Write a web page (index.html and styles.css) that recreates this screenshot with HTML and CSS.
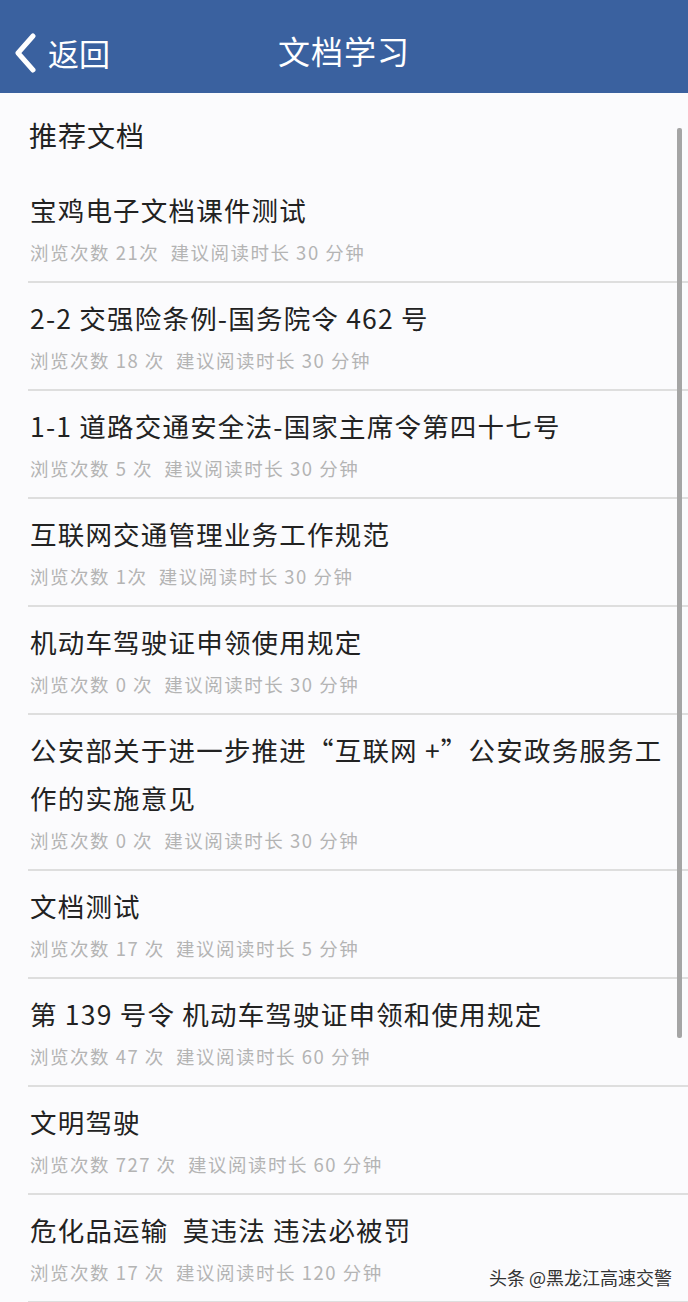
FILE: index.html
```html
<!DOCTYPE html>
<html lang="zh-CN">
<head>
    <meta charset="UTF-8">
    <meta name="viewport" content="width=device-width, initial-scale=1.0">
    <title>文档学习</title>
    <link rel="stylesheet" href="styles.css">
</head>
<body>
    <div class="navbar">
        <div class="back">
            <svg class="chevron" width="26" height="40" viewBox="0 0 26 40">
                <path d="M20 3 L5 20 L20 37" fill="none" stroke="#fff" stroke-width="5" stroke-linecap="round" stroke-linejoin="round"/>
            </svg>
            <span>返回</span>
        </div>
        <div class="nav-title">文档学习</div>
    </div>

    <div class="content">
        <div class="section-title">推荐文档</div>

        <ul class="doc-list">
            <li class="doc">
                <div class="doc-title">宝鸡电子文档课件测试</div>
                <div class="doc-meta">浏览次数 21次&nbsp;&nbsp;建议阅读时长 30 分钟</div>
            </li>
            <li class="doc">
                <div class="doc-title">2-2 交强险条例-国务院令 462 号</div>
                <div class="doc-meta">浏览次数 18 次&nbsp;&nbsp;建议阅读时长 30 分钟</div>
            </li>
            <li class="doc">
                <div class="doc-title">1-1 道路交通安全法-国家主席令第四十七号</div>
                <div class="doc-meta">浏览次数 5 次&nbsp;&nbsp;建议阅读时长 30 分钟</div>
            </li>
            <li class="doc">
                <div class="doc-title">互联网交通管理业务工作规范</div>
                <div class="doc-meta">浏览次数 1次&nbsp;&nbsp;建议阅读时长 30 分钟</div>
            </li>
            <li class="doc">
                <div class="doc-title">机动车驾驶证申领使用规定</div>
                <div class="doc-meta">浏览次数 0 次&nbsp;&nbsp;建议阅读时长 30 分钟</div>
            </li>
            <li class="doc">
                <div class="doc-title">公安部关于进一步推进“互联网 +”公安政务服务工作的实施意见</div>
                <div class="doc-meta">浏览次数 0 次&nbsp;&nbsp;建议阅读时长 30 分钟</div>
            </li>
            <li class="doc">
                <div class="doc-title">文档测试</div>
                <div class="doc-meta">浏览次数 17 次&nbsp;&nbsp;建议阅读时长 5 分钟</div>
            </li>
            <li class="doc">
                <div class="doc-title">第 139 号令 机动车驾驶证申领和使用规定</div>
                <div class="doc-meta">浏览次数 47 次&nbsp;&nbsp;建议阅读时长 60 分钟</div>
            </li>
            <li class="doc">
                <div class="doc-title">文明驾驶</div>
                <div class="doc-meta">浏览次数 727 次&nbsp;&nbsp;建议阅读时长 60 分钟</div>
            </li>
            <li class="doc">
                <div class="doc-title">危化品运输&nbsp;&nbsp;莫违法 违法必被罚</div>
                <div class="doc-meta">浏览次数 17 次&nbsp;&nbsp;建议阅读时长 120 分钟</div>
            </li>
        </ul>

        <div class="scrollbar"></div>
    </div>

    <div class="watermark">头条 @黑龙江高速交警</div>
</body>
</html>
```

FILE: styles.css
```css
html, body {
    margin: 0;
    padding: 0;
    height: 1302px;
    overflow: hidden;
}
body {
    font-family: "Noto Sans CJK SC", "Noto Sans", sans-serif;
    background: #fbfbfd;
    color: #222;
    position: relative;
}
.navbar {
    height: 93px;
    background: #3a619f;
    color: #fff;
    display: flex;
    align-items: center;
    justify-content: center;
    position: relative;
}
.back {
    position: absolute;
    left: 13px;
    top: 33px;
    display: flex;
    align-items: center;
    gap: 9px;
    font-size: 31px;
    line-height: 40px;
}
.chevron {
    display: block;
}
.nav-title {
    font-size: 32px;
    letter-spacing: 1px;
    line-height: 40px;
    margin-top: 6px;
}
.content {
    position: relative;
}
.section-title {
    font-size: 28px;
    letter-spacing: 1px;
    line-height: 48px;
    padding: 18px 29px 16px;
    color: #222;
}
.doc-list {
    list-style: none;
    margin: 0;
    padding: 0 0 0 28px;
}
.doc {
    padding: 11px 14px 11px 2px;
    border-bottom: 2px solid #dedede;
}
.doc-title {
    font-size: 26.5px;
    letter-spacing: 1.2px;
    line-height: 48px;
    color: #222;
}
.doc-meta {
    font-size: 18.5px;
    letter-spacing: 1.5px;
    line-height: 36px;
    color: #b4b4b4;
}
.scrollbar {
    position: absolute;
    right: 6px;
    top: 35px;
    width: 5px;
    height: 910px;
    background: #a5a5a5;
    border-radius: 2px;
}
.watermark {
    position: absolute;
    right: 16px;
    bottom: 12px;
    font-size: 18px;
    color: #333;
    text-shadow: 0 0 3px #fff;
}
```
